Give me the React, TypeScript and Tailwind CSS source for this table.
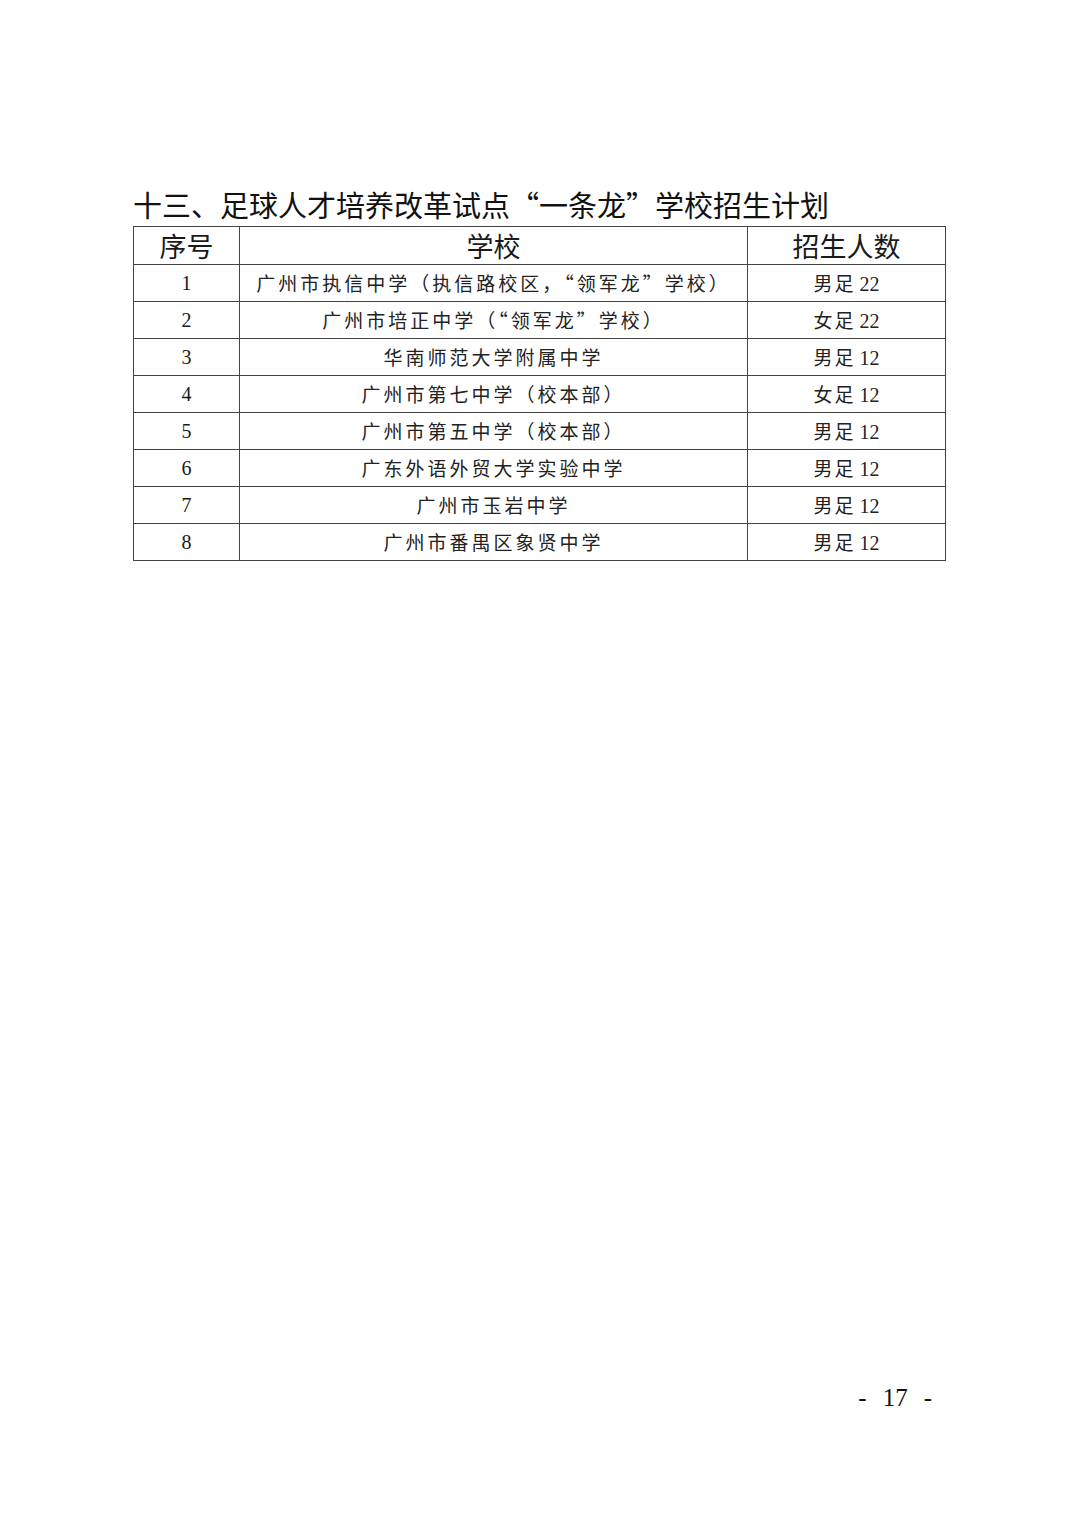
const rows = [
  { no: "1", school: "广州市执信中学（执信路校区，“领军龙”学校）", kind: "男足", n: "22" },
  { no: "2", school: "广州市培正中学（“领军龙”学校）", kind: "女足", n: "22" },
  { no: "3", school: "华南师范大学附属中学", kind: "男足", n: "12" },
  { no: "4", school: "广州市第七中学（校本部）", kind: "女足", n: "12" },
  { no: "5", school: "广州市第五中学（校本部）", kind: "男足", n: "12" },
  { no: "6", school: "广东外语外贸大学实验中学", kind: "男足", n: "12" },
  { no: "7", school: "广州市玉岩中学", kind: "男足", n: "12" },
  { no: "8", school: "广州市番禺区象贤中学", kind: "男足", n: "12" },
];

const cjk = "font-['Noto_Sans_CJK_SC',sans-serif]";
const serif = "font-['Liberation_Serif','Noto_Sans_CJK_SC',serif]";

export default function App() {
  return (
    <div className="relative w-[1080px] h-[1528px] bg-white text-[#1a1a1a]">
      <div className="flex flex-col pl-[133px] pt-[186px]">
        <h1
          className={`${cjk} text-[29px] leading-[36px] font-normal text-[#111]`}
        >
          十三、足球人才培养改革试点“一条龙”学校招生计划
        </h1>

        <table className="mt-[4px] w-[813px] border-collapse border border-[#777]">
          <thead>
            <tr className="h-[38px]">
              <th
                className={`${cjk} w-[106px] border border-[#444] font-normal text-[27px] leading-[36px]`}
              >
                序号
              </th>
              <th
                className={`${cjk} w-[508px] border border-[#444] font-normal text-[27px] leading-[36px]`}
              >
                学校
              </th>
              <th
                className={`${cjk} border border-[#444] font-normal text-[27px] leading-[36px]`}
              >
                招生人数
              </th>
            </tr>
          </thead>
          <tbody>
            {rows.map((r) => (
              <tr key={r.no} className="h-[37px]">
                <td className={`${serif} border border-[#444] text-center text-[20px] leading-[30px]`}>
                  {r.no}
                </td>
                <td
                  className={`${cjk} border border-[#444] text-center text-[19px] leading-[30px] tracking-[3px] text-[#222]`}
                >
                  {r.school}
                </td>
                <td className="border border-[#444] text-center text-[20px] leading-[30px] text-[#222]">
                  <span className={`${cjk} text-[19px] tracking-[2px]`}>{r.kind}</span>
                  <span className={`${serif} ml-[4px]`}>{r.n}</span>
                </td>
              </tr>
            ))}
          </tbody>
        </table>
      </div>

      <div className="absolute right-[148px] top-[1383px] flex gap-[16px] items-center font-['Liberation_Serif',serif] text-[25px] leading-[30px] text-[#111]">
        <span>-</span>
        <span>17</span>
        <span>-</span>
      </div>
    </div>
  );
}
